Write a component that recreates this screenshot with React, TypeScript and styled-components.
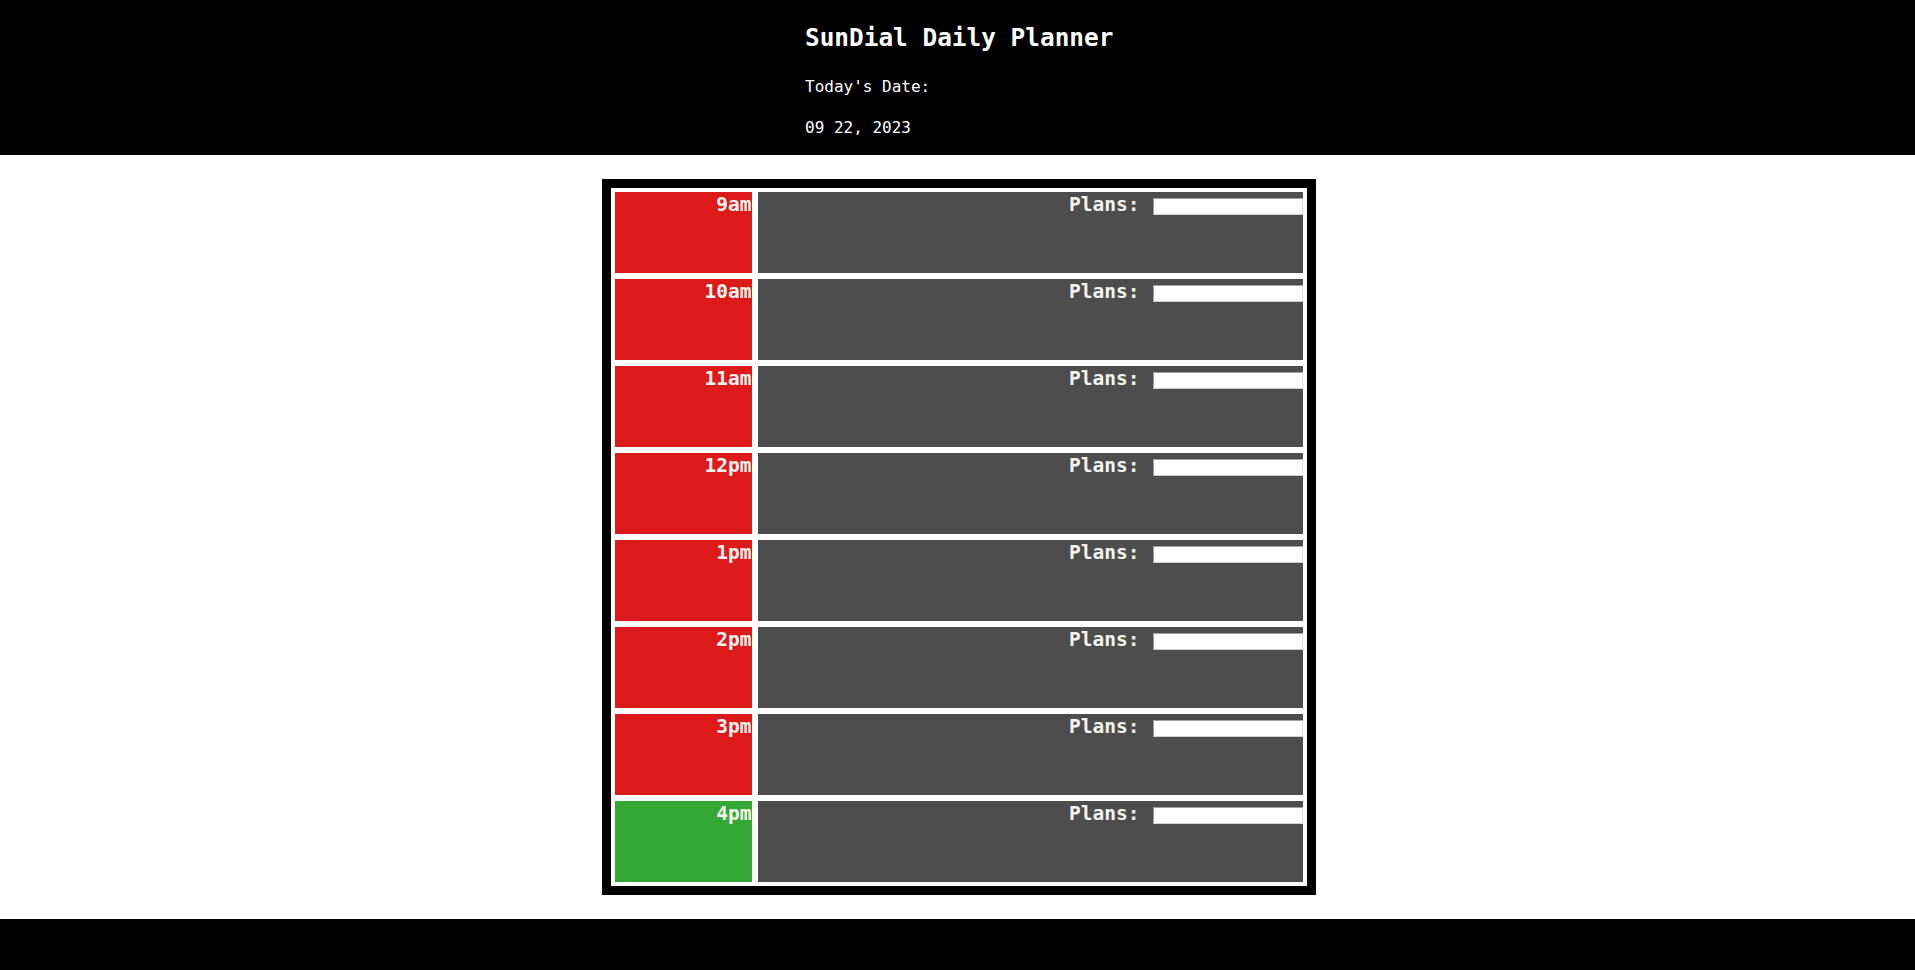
import React from "react";
import styled, { createGlobalStyle } from "styled-components";

const GlobalStyle = createGlobalStyle`
  html, body {
    margin: 0;
    padding: 0;
    background: #ffffff;
  }
  body {
    font-family: "DejaVu Sans Mono", "Liberation Mono", monospace;
  }
  * { box-sizing: border-box; }
`;

const Page = styled.div`
  display: flex;
  flex-direction: column;
  min-height: 970px;
`;

const Header = styled.header`
  background: #000;
  color: #fff;
  height: 155px;
  padding: 23px 0 0 805px;
  display: flex;
  flex-direction: column;
`;

const Title = styled.h1`
  margin: 0 0 25px 0;
  font-size: 24.4px;
  font-weight: bold;
  line-height: normal;
  letter-spacing: 0;
`;

const Info = styled.p<{ $gap?: number }>`
  margin: 0 0 ${(p) => p.$gap ?? 0}px 0;
  font-size: 16px;
  line-height: normal;
`;

const Main = styled.main`
  display: flex;
  justify-content: center;
  padding: 24px 0 24px 0;
`;

const Board = styled.div`
  border: 9px solid #000;
  background: #fff;
  padding: 4px;
  display: grid;
  grid-template-columns: 137px 545px;
  grid-auto-rows: 81px;
  column-gap: 6px;
  row-gap: 6px;
  margin-left: 2px;
`;

const HourCell = styled.div<{ $state: "past" | "present" | "future" }>`
  background: ${(p) =>
    p.$state === "past" ? "#dc1a1a" : p.$state === "present" ? "#33a834" : "#33a834"};
  color: #f4f4ef;
  font-size: 19.5px;
  font-weight: bold;
  text-align: right;
  padding-top: 1px;
  line-height: normal;
`;

const PlanCell = styled.div`
  background: #4d4d4d;
  color: #f4f4ef;
  display: flex;
  justify-content: flex-end;
  align-items: flex-start;
  padding-top: 1px;
`;

const PlanLabel = styled.label`
  font-size: 19.5px;
  font-weight: bold;
  line-height: normal;
  margin-right: 13px;
`;

const PlanInput = styled.input`
  width: 150px;
  height: 17px;
  margin-top: 5px;
  border: 1px solid #a0a0a0;
  border-right-color: #e0e0e0;
  border-bottom-color: #d0d0d0;
  background: #fff;
  padding: 0;
  font-family: inherit;
  font-size: 12px;
`;

const Footer = styled.footer`
  background: #000;
  height: 52px;
`;

const hours: { label: string; state: "past" | "present" | "future" }[] = [
  { label: "9am", state: "past" },
  { label: "10am", state: "past" },
  { label: "11am", state: "past" },
  { label: "12pm", state: "past" },
  { label: "1pm", state: "past" },
  { label: "2pm", state: "past" },
  { label: "3pm", state: "past" },
  { label: "4pm", state: "present" },
];

export default function App() {
  return (
    <Page>
      <GlobalStyle />
      <Header>
        <Title>SunDial Daily Planner</Title>
        <Info $gap={22}>Today's Date:</Info>
        <Info>09 22, 2023</Info>
      </Header>
      <Main>
        <Board>
          {hours.map((h) => (
            <React.Fragment key={h.label}>
              <HourCell $state={h.state}>{h.label}</HourCell>
              <PlanCell>
                <PlanLabel>Plans:</PlanLabel>
                <PlanInput type="text" />
              </PlanCell>
            </React.Fragment>
          ))}
        </Board>
      </Main>
      <Footer />
    </Page>
  );
}
